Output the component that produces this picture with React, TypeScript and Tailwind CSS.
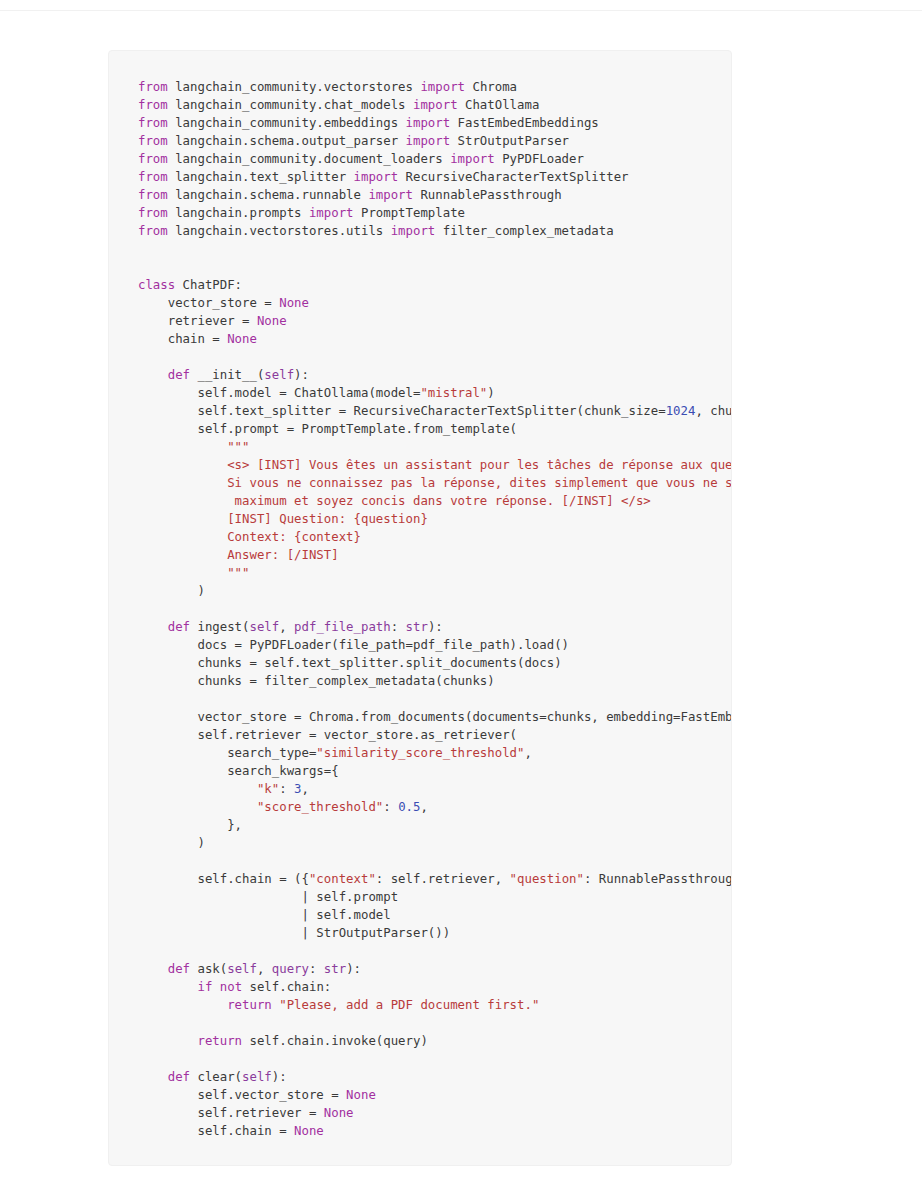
import React from 'react';

const code = `from langchain_community.vectorstores import Chroma
from langchain_community.chat_models import ChatOllama
from langchain_community.embeddings import FastEmbedEmbeddings
from langchain.schema.output_parser import StrOutputParser
from langchain_community.document_loaders import PyPDFLoader
from langchain.text_splitter import RecursiveCharacterTextSplitter
from langchain.schema.runnable import RunnablePassthrough
from langchain.prompts import PromptTemplate
from langchain.vectorstores.utils import filter_complex_metadata


class ChatPDF:
    vector_store = None
    retriever = None
    chain = None

    def __init__(self):
        self.model = ChatOllama(model="mistral")
        self.text_splitter = RecursiveCharacterTextSplitter(chunk_size=1024, chunk_overlap=100)
        self.prompt = PromptTemplate.from_template(
            """
            <s> [INST] Vous êtes un assistant pour les tâches de réponse aux questions. Utilisez les éléments de contexte suivants pour répondre à la question.
            Si vous ne connaissez pas la réponse, dites simplement que vous ne savez pas. Utilisez trois phrases
             maximum et soyez concis dans votre réponse. [/INST] </s>
            [INST] Question: {question}
            Context: {context}
            Answer: [/INST]
            """
        )

    def ingest(self, pdf_file_path: str):
        docs = PyPDFLoader(file_path=pdf_file_path).load()
        chunks = self.text_splitter.split_documents(docs)
        chunks = filter_complex_metadata(chunks)

        vector_store = Chroma.from_documents(documents=chunks, embedding=FastEmbedEmbeddings())
        self.retriever = vector_store.as_retriever(
            search_type="similarity_score_threshold",
            search_kwargs={
                "k": 3,
                "score_threshold": 0.5,
            },
        )

        self.chain = ({"context": self.retriever, "question": RunnablePassthrough()}
                      | self.prompt
                      | self.model
                      | StrOutputParser())

    def ask(self, query: str):
        if not self.chain:
            return "Please, add a PDF document first."

        return self.chain.invoke(query)

    def clear(self):
        self.vector_store = None
        self.retriever = None
        self.chain = None`;

const tokenRe = /("[^"]*")|\b(from|import|class|def|None|if|not|return)\b|\b(\d+(?:\.\d+)?)\b/g;

// colour one line of python, good enough for this snippet
function highlight(line: string) {
  const parts: React.ReactNode[] = [];
  let last = 0;
  let m: RegExpExecArray | null;
  tokenRe.lastIndex = 0;
  while ((m = tokenRe.exec(line))) {
    if (m.index > last) parts.push(line.slice(last, m.index));
    if (m[1]) parts.push(<span key={m.index} className="text-[#b83b3b]">{m[1]}</span>);
    else if (m[2]) parts.push(<span key={m.index} className="text-[#a2309f]">{m[2]}</span>);
    else parts.push(<span key={m.index} className="text-[#3b4db3]">{m[3]}</span>);
    last = m.index + m[0].length;
  }
  if (last < line.length) parts.push(line.slice(last));
  return parts;
}

function renderLine(line: string, inDoc: boolean) {
  if (inDoc) return <span className="text-[#b83b3b]">{line}</span>;
  const trimmed = line.trimStart();
  if (trimmed.startsWith('def ') && line.includes('(')) {
    const open = line.indexOf('(');
    const close = line.lastIndexOf(')');
    const params = line.slice(open + 1, close);
    return (
      <>
        {highlight(line.slice(0, open + 1))}
        {params.split(/([,:]\s*)/).map((p, j) =>
          /^[,:]/.test(p) ? p : <span key={j} className="text-[#8a3c9c]">{p}</span>
        )}
        {line.slice(close)}
      </>
    );
  }
  return highlight(line);
}

export default function App() {
  const lines = code.split('\n');
  let inDoc = false;

  return (
    <div className="min-h-screen bg-white">
      <div className="h-[11px] border-b border-[#f1f1f1]" />
      <div className="ml-[108px] mt-[39px] w-[624px] rounded-[4px] border border-[#f0f0f0] bg-[#f7f7f7] overflow-hidden">
        <pre className="pl-[29px] pt-[27px] pb-[25px] text-[12.35px] leading-[18px] text-[#3a3a3a] whitespace-pre" style={{ fontFamily: '"DejaVu Sans Mono", "Liberation Mono", monospace' }}>
          {lines.map((line, i) => {
            const isQuote = line.trim() === '"""';
            const node = renderLine(line, inDoc || isQuote);
            if (isQuote) inDoc = !inDoc;
            return (
              <div key={i} className="h-[18px]">
                {line === '' ? ' ' : node}
              </div>
            );
          })}
        </pre>
      </div>
    </div>
  );
}
